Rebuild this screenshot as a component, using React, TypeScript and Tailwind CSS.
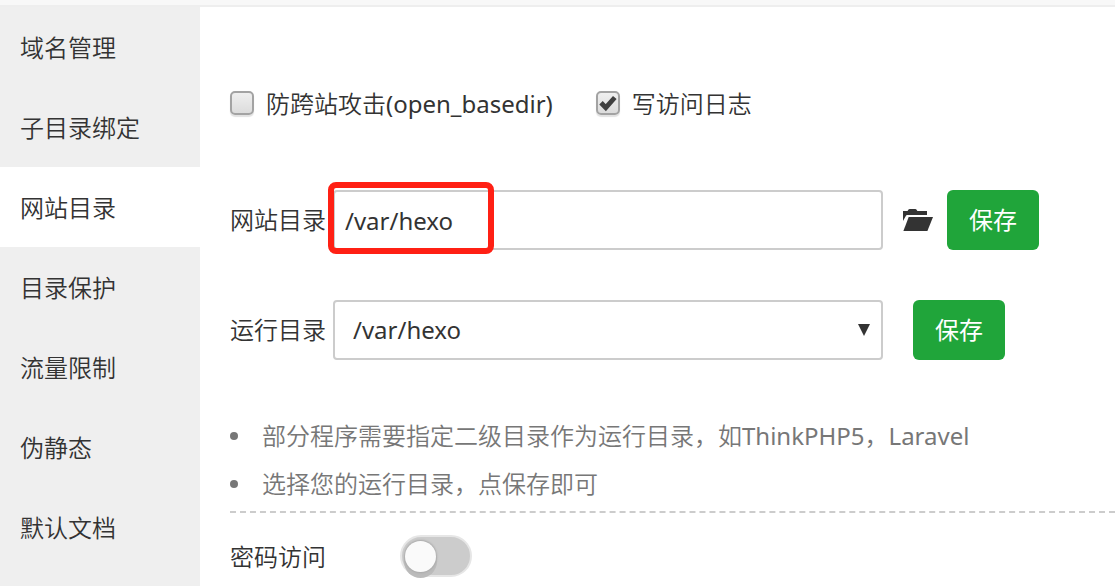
import { useState } from "react";
import type { ReactNode } from "react";

const menu = ["域名管理", "子目录绑定", "网站目录", "目录保护", "流量限制", "伪静态", "默认文档"];

function CheckOption({ children, initial }: { children: ReactNode; initial: boolean }) {
  const [checked, setChecked] = useState(initial);
  return (
    <label className="flex items-center gap-3">
      <span className="grid size-6 shrink-0 place-items-center">
        <input
          type="checkbox"
          checked={checked}
          onChange={(e) => setChecked(e.target.checked)}
          className="col-start-1 row-start-1 size-6 appearance-none rounded-[5px] border-2 border-[#a3a3a3] bg-linear-to-b from-[#efefef] to-[#dcdcdc] shadow-[0_2px_1px_#e2e2e2]"
        />
        {checked && (
          <svg viewBox="0 0 18 18" className="pointer-events-none col-start-1 row-start-1 size-[18px]" aria-hidden="true">
            <path d="M2 8.800 L6.800 13.700 L15.800 3.500" fill="none" stroke="#404040" strokeWidth="4.8" />
          </svg>
        )}
      </span>
      <span className="pt-0.5 whitespace-nowrap">{children}</span>
    </label>
  );
}

function SaveButton({ className = "" }: { className?: string }) {
  return (
    <button type="button" className={`h-[60px] shrink-0 rounded-md bg-[#20a53a] px-[22px] font-normal text-white ${className}`}>
      保存
    </button>
  );
}

function FieldLabel({ id, children }: { id: string; children: ReactNode }) {
  return (
    <label htmlFor={id} className="mr-[7px] shrink-0">
      {children}
    </label>
  );
}

function Latin({ children }: { children: ReactNode }) {
  return <span className="font-normal">{children}</span>;
}

export default function App() {
  const [active, setActive] = useState("网站目录");
  const [path, setPath] = useState("/var/hexo");
  const [locked, setLocked] = useState(false);

  return (
    <div className="flex min-h-screen flex-col bg-white font-['Noto_Sans','Noto_Sans_CJK_SC',sans-serif] text-2xl leading-9 font-[350] text-[#333]" lang="zh-CN">
      <div className="h-[7px] border-b-2 border-[#eee] bg-[#f8f8f8]" />
      <div className="flex flex-1">
        <nav className="w-[200px] shrink-0 bg-[#efefef]">
          {menu.map((item) => (
            <button
              key={item}
              type="button"
              onClick={() => setActive(item)}
              className={`flex h-20 w-full items-center px-5 pt-0.5 text-left ${item === active ? "bg-white" : ""}`}
            >
              {item}
            </button>
          ))}
        </nav>

        <main className="min-w-0 flex-1 pt-[77px] pl-[30px]">
          <div className="flex items-center gap-[43px]">
            <CheckOption initial={false}>
              防跨站攻击<Latin>(open_basedir)</Latin>
            </CheckOption>
            <CheckOption initial={true}>写访问日志</CheckOption>
          </div>

          <div className="mt-[68px] flex items-center">
            <FieldLabel id="site-path">网站目录</FieldLabel>
            <div className="relative max-w-[550px] min-w-0 flex-1">
              <input
                id="site-path"
                type="text"
                value={path}
                onChange={(e) => setPath(e.target.value)}
                className="block h-[60px] w-full rounded border-2 border-[#ccc] bg-white px-[10px] font-normal outline-none"
              />
              <div className="pointer-events-none absolute -top-2 -left-[5px] h-[72px] w-[166px] rounded-lg border-6 border-[#ff2014]" />
            </div>
            <button type="button" aria-label="选择目录" className="mr-[14px] ml-5 shrink-0">
              <svg viewBox="0 0 30 22" className="h-[22px] w-[30px]" fill="#333" aria-hidden="true">
                <path d="M0 12V2h4.500L5.500.5Q6 0 6.600 0h5.800q.6 0 1 .5L14.400 2H24v4H4.200Q3.200 6 2.800 6.900Z" />
                <path d="M5.700 8H30l-5.600 14H.4Z" />
              </svg>
            </button>
            <SaveButton />
          </div>

          <div className="mt-[50px] flex items-center">
            <FieldLabel id="run-path">运行目录</FieldLabel>
            <div className="grid max-w-[550px] min-w-0 flex-1 items-center">
              <select
                id="run-path"
                className="col-start-1 row-start-1 h-[60px] w-full appearance-none rounded border-2 border-[#ccc] bg-white px-[18px] font-normal outline-none"
              >
                <option>/var/hexo</option>
              </select>
              <svg viewBox="0 0 12 12" className="pointer-events-none col-start-1 row-start-1 mr-[13px] size-3 justify-self-end" aria-hidden="true">
                <path d="M0 0h12L6 12Z" fill="#333" />
              </svg>
            </div>
            <SaveButton className="ml-[30px]" />
          </div>

          <ul className="mt-[52px] border-b-2 border-dashed border-[#ccc] pb-[3px] leading-[48px] text-[#777]">
            <li className="flex items-center gap-6">
              <span className="size-2 shrink-0 rounded-full bg-[#777]" />
              <span>
                部分程序需要指定二级目录作为运行目录，如<Latin>ThinkPHP5</Latin>，<Latin>Laravel</Latin>
              </span>
            </li>
            <li className="flex items-center gap-6">
              <span className="size-2 shrink-0 rounded-full bg-[#777]" />
              <span>选择您的运行目录，点保存即可</span>
            </li>
          </ul>

          <div className="mt-[22px] flex items-center">
            <label htmlFor="password-access" className="mr-[74px] pt-0.5">
              密码访问
            </label>
            <input
              id="password-access"
              type="checkbox"
              role="switch"
              checked={locked}
              onChange={(e) => setLocked(e.target.checked)}
              className="flex h-[42px] w-[72px] appearance-none items-center rounded-full border-2 border-[#e6e6e6] bg-[#ccc] px-[3px] before:size-[31px] before:rounded-full before:bg-[#fafafa] before:shadow-[0_0_2px_1px_#aaa,0_5px_0_1px_#bbb] checked:justify-end checked:bg-[#20a53a]"
            />
          </div>
        </main>
      </div>
    </div>
  );
}
